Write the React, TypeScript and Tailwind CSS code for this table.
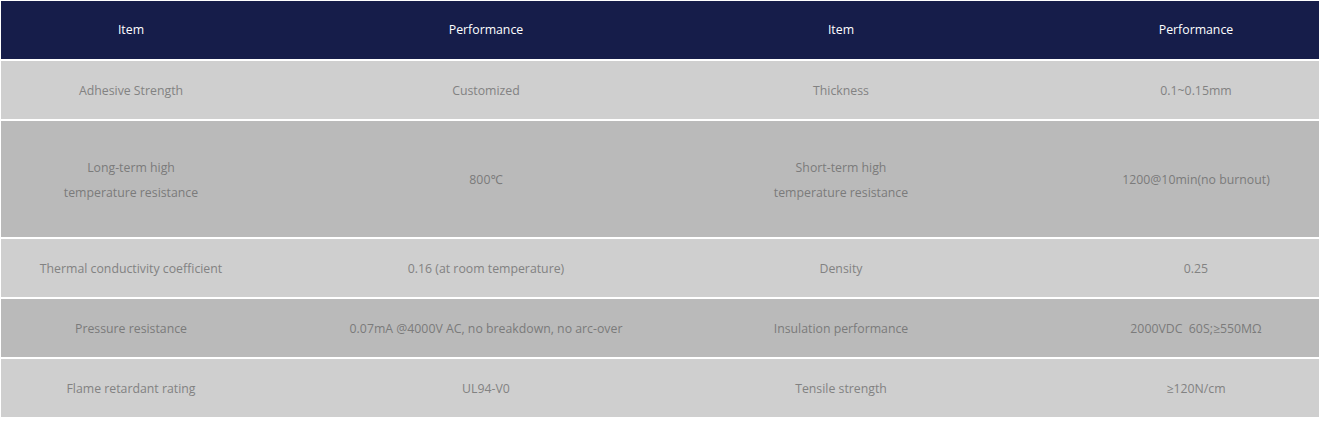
import React from "react";

const rows: { cells: string[][]; tall?: boolean; dark?: boolean }[] = [
  { cells: [["Adhesive Strength"], ["Customized"], ["Thickness"], ["0.1~0.15mm"]] },
  {
    cells: [
      ["Long-term high", "temperature resistance"],
      ["800℃"],
      ["Short-term high", "temperature resistance"],
      ["1200@10min(no burnout)"],
    ],
    tall: true,
    dark: true,
  },
  { cells: [["Thermal conductivity coefficient"], ["0.16 (at room temperature)"], ["Density"], ["0.25"]] },
  {
    cells: [["Pressure resistance"], ["0.07mA @4000V AC, no breakdown, no arc-over"], ["Insulation performance"], ["2000VDC\u00a0\u00a060S;≥550MΩ"]],
    dark: true,
  },
  { cells: [["Flame retardant rating"], ["UL94-V0"], ["Tensile strength"], ["≥120N/cm"]] },
];

const widths = ["w-[260px]", "w-[450px]", "w-[260px]", "w-[450px]"];

export default function App() {
  return (
    <div className="w-[1321px] h-[426px] bg-white pt-px pl-px" style={{ fontFamily: '"Open Sans", "Noto Sans", sans-serif' }}>
      <div className="w-[1318px] overflow-hidden">
        <div className="w-[1420px] flex flex-col">
          <div className="flex h-[58px] bg-[#161d4a] text-white text-[12.3px] border-b-2 border-white box-content">
            {["Item", "Performance", "Item", "Performance"].map((t, i) => (
              <div key={i} className={`${widths[i]} flex items-center justify-center`}>
                {t}
              </div>
            ))}
          </div>
          {rows.map((r, ri) => (
            <div
              key={ri}
              className={`flex ${r.tall ? "h-[116px]" : "h-[58px]"} ${r.dark ? "bg-[#bababa] text-[#7b7b7b]" : "bg-[#cfcfcf] text-[#828282]"} text-[12.3px] border-b-2 border-white box-content`}
            >
              {r.cells.map((c, ci) => (
                <div key={ci} className={`${widths[ci]} flex flex-col items-center justify-center text-center leading-[25px] pt-px`}>
                  {c.map((line, li) => (
                    <div key={li}>{line}</div>
                  ))}
                </div>
              ))}
            </div>
          ))}
        </div>
      </div>
    </div>
  );
}
